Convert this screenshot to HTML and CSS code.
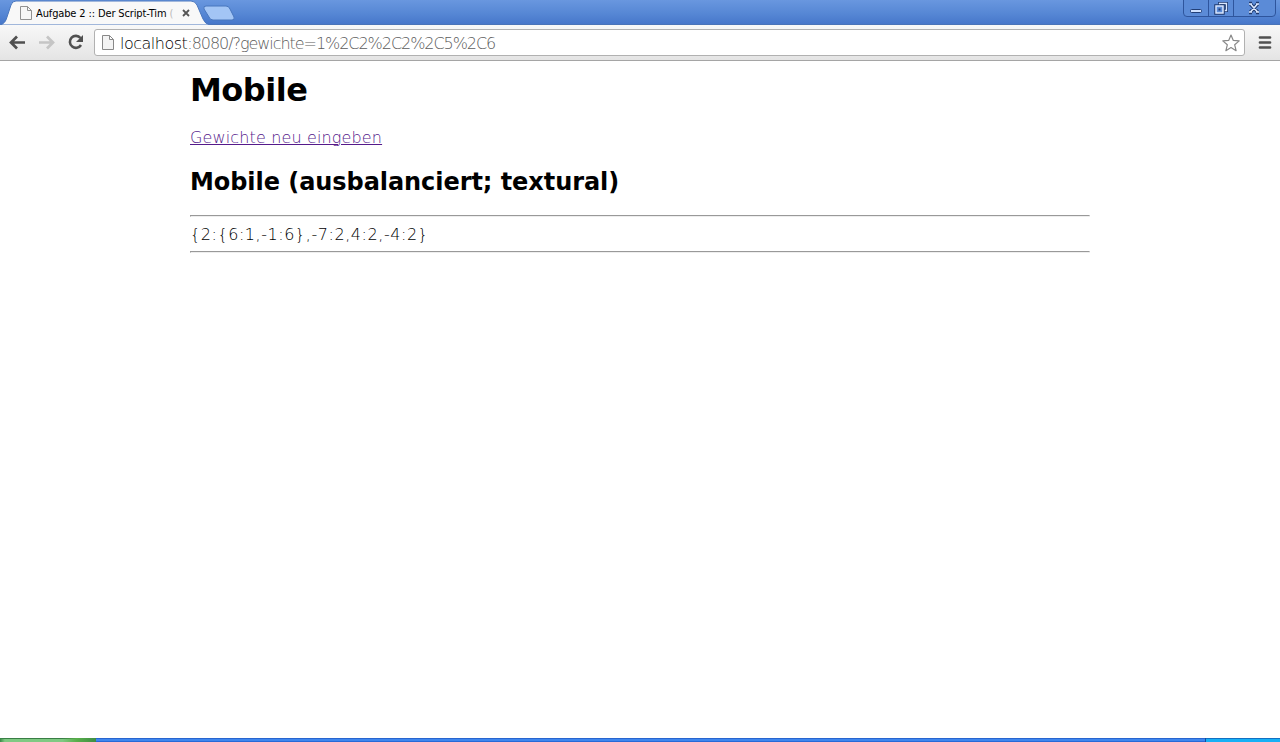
FILE: index.html
```html
<!DOCTYPE html>
<html lang="de">
<head>
<meta charset="utf-8">
<title>Aufgabe 2</title>
<link rel="stylesheet" href="styles.css">
</head>
<body>
<header class="titlebar">
  <div class="tab">
    <svg class="tab-shape" width="240" height="25" viewBox="0 0 240 25">
      <path d="M0 25C4 24 6 21 7 17L11 5Q12 1 16 1H191Q195 1 197 5L203 19Q205 24 210 25Z" fill="#f8f8f8" stroke="#4a77be" stroke-width="1"/>
      <path d="M206 6H226Q229 6 230 9L234 17Q235 20 232 20H213Q210 20 209 17L204 9Q203 6 206 6Z" fill="#a3c5f5" stroke="#4876bd"/>
    </svg>
    <svg class="tab-page" width="12" height="14" viewBox="0 0 12 14"><path d="M.5.5H7.5L11.5 4.5V13.5H.5ZM7.5.5V4.5H11.5" fill="#f6f6f6" stroke="#919191"/></svg>
    <span class="tab-title">Aufgabe 2 :: Der Script-Tim <i>(</i></span>
    <svg class="tab-close" width="8" height="8" viewBox="0 0 8 8"><path d="M1 1L7 7M7 1L1 7" stroke="#555" stroke-width="1.8"/></svg>
  </div>
  <svg class="window-buttons" width="95" height="17" viewBox="0 0 95 17">
    <path d="M.5 0V13Q.5 16.5 4 16.5H89Q92.500 16.500 92.500 13V0M25.500 0V16M50.500 0V16" fill="#5b8bd7" stroke="#2e559d"/>
    <rect x="7.500" y="9.500" width="11" height="3" rx="1" fill="#cfe1ff" stroke="#223f77"/>
    <path d="M36.500 3.500H43.500V10.500H36.500Z" fill="none" stroke="#203b70" stroke-width="3"/>
    <path d="M36.500 3.500H43.500V10.500H36.500Z" fill="none" stroke="#d9e7ff" stroke-width="1.300"/>
    <rect x="33" y="6" width="7" height="7" fill="#5b8bd7" stroke="#203b70" stroke-width="3.500"/>
    <rect x="33" y="6" width="7" height="7" fill="#5b8bd7" stroke="#d9e7ff" stroke-width="1.500"/>
    <rect x="35.500" y="8.500" width="2" height="2" fill="#203b70"/>
    <path d="M66 3.500H69M73 3.500H76M66 12.500H69M73 12.500H76M67.500 4L74.500 12M74.500 4L67.500 12" stroke="#203b70" stroke-width="3.500"/>
    <path d="M66 4H69M73 4H76M66 12H69M73 12H76M67.500 4L74.500 12M74.500 4L67.500 12" stroke="#d9e7ff" stroke-width="1.600"/>
  </svg>
</header>
<nav class="toolbar">
  <svg class="nav-icons" width="94" height="35" viewBox="0 0 94 35">
    <path d="M25 17.500H12M17 11.500L11 17.500L17 23.500" fill="none" stroke="#505050" stroke-width="2.700"/>
    <path d="M39 17.500H52M47 11.500L53 17.500L47 23.500" fill="none" stroke="#c5c5c5" stroke-width="2.700"/>
    <path d="M80.500 13A6 6 0 1 0 81 20" fill="none" stroke="#505050" stroke-width="2.600"/>
    <path d="M83 10V17H76Z" fill="#505050"/>
  </svg>
  <div class="address">
    <svg class="page-icon" width="12" height="15" viewBox="0 0 12 15"><path d="M.5.500H7.500L11.500 4.500V14.500H.5ZM7.500.500V4.500H11.500" fill="#f3f3f3" stroke="#888"/></svg>
    <span class="url"><b>localhost</b>:8080/?gewichte=1%2C2%2C2%2C5%2C6</span>
    <svg class="star" width="18" height="18" viewBox="0 0 18 18"><path d="M9 1L11.300 6.400L17.200 6.900L12.700 10.800L14.100 16.700L9 13.500L3.900 16.700L5.300 10.800L.8 6.900L6.700 6.400Z" fill="#fff" stroke="#888" stroke-width="1.200" stroke-linejoin="round"/></svg>
  </div>
  <svg class="menu" width="14" height="13" viewBox="0 0 14 13"><path d="M2 1.500H12M2 6.500H12M2 11.500H12" stroke="#505050" stroke-width="2.700" stroke-linecap="round"/></svg>
</nav>
<main class="content">
  <h1>Mobile</h1>
  <p><a href="#">Gewichte neu eingeben</a></p>
  <h2>Mobile (ausbalanciert; textural)</h2>
  <hr>
  <div class="result">{2:{6:1,-1:6},-7:2,4:2,-4:2}</div>
  <hr>
</main>
<footer class="taskbar"><div class="start"></div><div class="tasks"></div><div class="tray"></div></footer>
</body>
</html>
```
FILE: styles.css
```css
* { box-sizing: border-box; }
body { margin: 0; height: 742px; display: flex; flex-direction: column; overflow: hidden; background: #fff; color: #000; font-family: "DejaVu Sans", sans-serif; }
svg { display: block; flex: none; }
.titlebar { height: 25px; flex: none; display: flex; justify-content: space-between; align-items: flex-start; background: linear-gradient(#6997df, #5586d4 60%, #4777ca); border-bottom: 1px solid #4a74b8; }
.tab { position: relative; width: 240px; height: 25px; display: flex; align-items: center; padding-left: 20px; }
.tab-shape { position: absolute; left: 0; top: 0; }
.tab-page, .tab-title, .tab-close { position: relative; }
.tab-title { width: 138px; margin: 2px 0 0 4px; font: 11px/16px "DejaVu Sans Condensed", "DejaVu Sans", sans-serif; letter-spacing: -.13px; white-space: nowrap; overflow: hidden; }
.tab-title i { color: #bbb; font-style: normal; }
.tab-close { margin: 1px 0 0 8px; }
.window-buttons { margin-right: 2px; }
.toolbar { height: 36px; flex: none; display: flex; align-items: flex-start; background: linear-gradient(#f8f8f8, #e4e4e4); border-bottom: 1px solid #a5a5a5; }
.address { width: 1151px; height: 27px; margin-top: 4px; padding: 0 4px 0 7px; display: flex; align-items: center; background: #fff; border: 1px solid #b1b1b1; border-radius: 3px; }
.url { flex: 1; margin-left: 6px; padding-top: 2px; font-size: 16px; font-weight: 200; letter-spacing: -1.05px; color: #5c5c5c; white-space: nowrap; }
.url b { font-weight: 200; letter-spacing: -.5px; color: #000; }
.menu { margin: 11px 0 0 13px; }
.content { width: 900px; flex: 1; margin: 0 auto; font-size: 16px; font-weight: 200; }
h1, h2, p { margin: 0; white-space: nowrap; }
h1 { height: 64px; padding-top: 10px; font-size: 32px; line-height: 39px; letter-spacing: -.5px; }
p { height: 40px; line-height: 25px; }
a { color: #551a8b; letter-spacing: .14px; text-decoration-thickness: 1px; }
h2 { height: 50px; padding-top: 1px; font-size: 24px; line-height: 32px; letter-spacing: -.06px; }
hr { height: 2px; margin: 0; border: 1px solid; border-color: #999 #eee #eee #999; }
.result { height: 34px; padding-top: 1px; line-height: 34px; letter-spacing: .56px; }
.taskbar { height: 4px; flex: none; display: flex; }
.start { width: 96px; background: linear-gradient(90deg, #398947, transparent 5%, transparent 65%, #58ae4b 80%, #3e8e45), linear-gradient(#397e45 1px, #7fc983 1px); }
.tasks { flex: 1; background: linear-gradient(#2865cf 1px, #3f86ee 1px 3px, #2869d7 3px); }
.tray { width: 75px; border-left: 1px solid #154b9a; background: linear-gradient(#1270c2 1px, #18b0f5 1px); }
```
